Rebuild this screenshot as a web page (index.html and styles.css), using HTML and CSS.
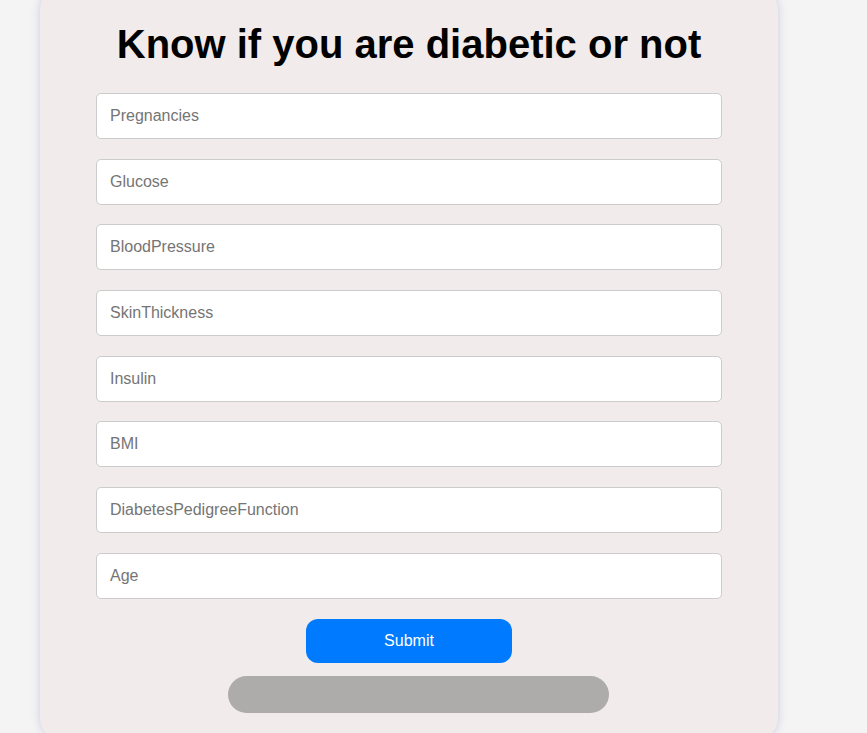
FILE: index.html
```html
<!DOCTYPE html>
<html>
<head>
<meta charset="utf-8">
<link rel="stylesheet" href="styles.css">
</head>
<body>
<div class="card">
  <h1 class="title">Know if you are diabetic or not</h1>
  <form class="form">
    <input class="field" type="text" placeholder="Pregnancies">
    <input class="field" type="text" placeholder="Glucose">
    <input class="field" type="text" placeholder="BloodPressure">
    <input class="field" type="text" placeholder="SkinThickness">
    <input class="field" type="text" placeholder="Insulin">
    <input class="field" type="text" placeholder="BMI">
    <input class="field" type="text" placeholder="DiabetesPedigreeFunction">
    <input class="field" type="text" placeholder="Age">
    <button class="submit" type="button">Submit</button>
    <div class="result"></div>
  </form>
</div>
</body>
</html>
```

FILE: styles.css
```css
html, body {
  margin: 0;
  padding: 0;
  background: #f4f4f5;
  font-family: "Liberation Sans", Arial, sans-serif;
  overflow: hidden;
}
.card {
  width: 738px;
  box-sizing: border-box;
  margin: -12px 0 0 40px;
  padding: 33px 56px 27px;
  background: #f1ebeb;
  border-radius: 22px;
  box-shadow: 0 0 8px rgba(150, 150, 200, 0.45);
}
.title {
  margin: 0 0 26px;
  text-align: center;
  font-size: 40px;
  font-weight: bold;
  color: #000;
  line-height: 46px;
}
.form {
  display: flex;
  flex-direction: column;
  align-items: center;
}
.field {
  width: 100%;
  height: 46px;
  box-sizing: border-box;
  margin-bottom: 19.7px;
  padding: 0 13px;
  border: 1px solid #cccccc;
  border-radius: 5px;
  background: #fff;
  font-family: "Liberation Sans", Arial, sans-serif;
  font-size: 16px;
  outline: none;
}
.field::placeholder {
  color: #757575;
}
.submit {
  width: 206px;
  height: 44px;
  border: none;
  border-radius: 12px;
  background: #007bff;
  color: #fff;
  font-family: "Liberation Sans", Arial, sans-serif;
  font-size: 16px;
  margin: 0 0 13px;
}
.result {
  width: 381px;
  height: 37px;
  margin-left: 18px;
  border-radius: 19px;
  background: #adacaa;
}
```
